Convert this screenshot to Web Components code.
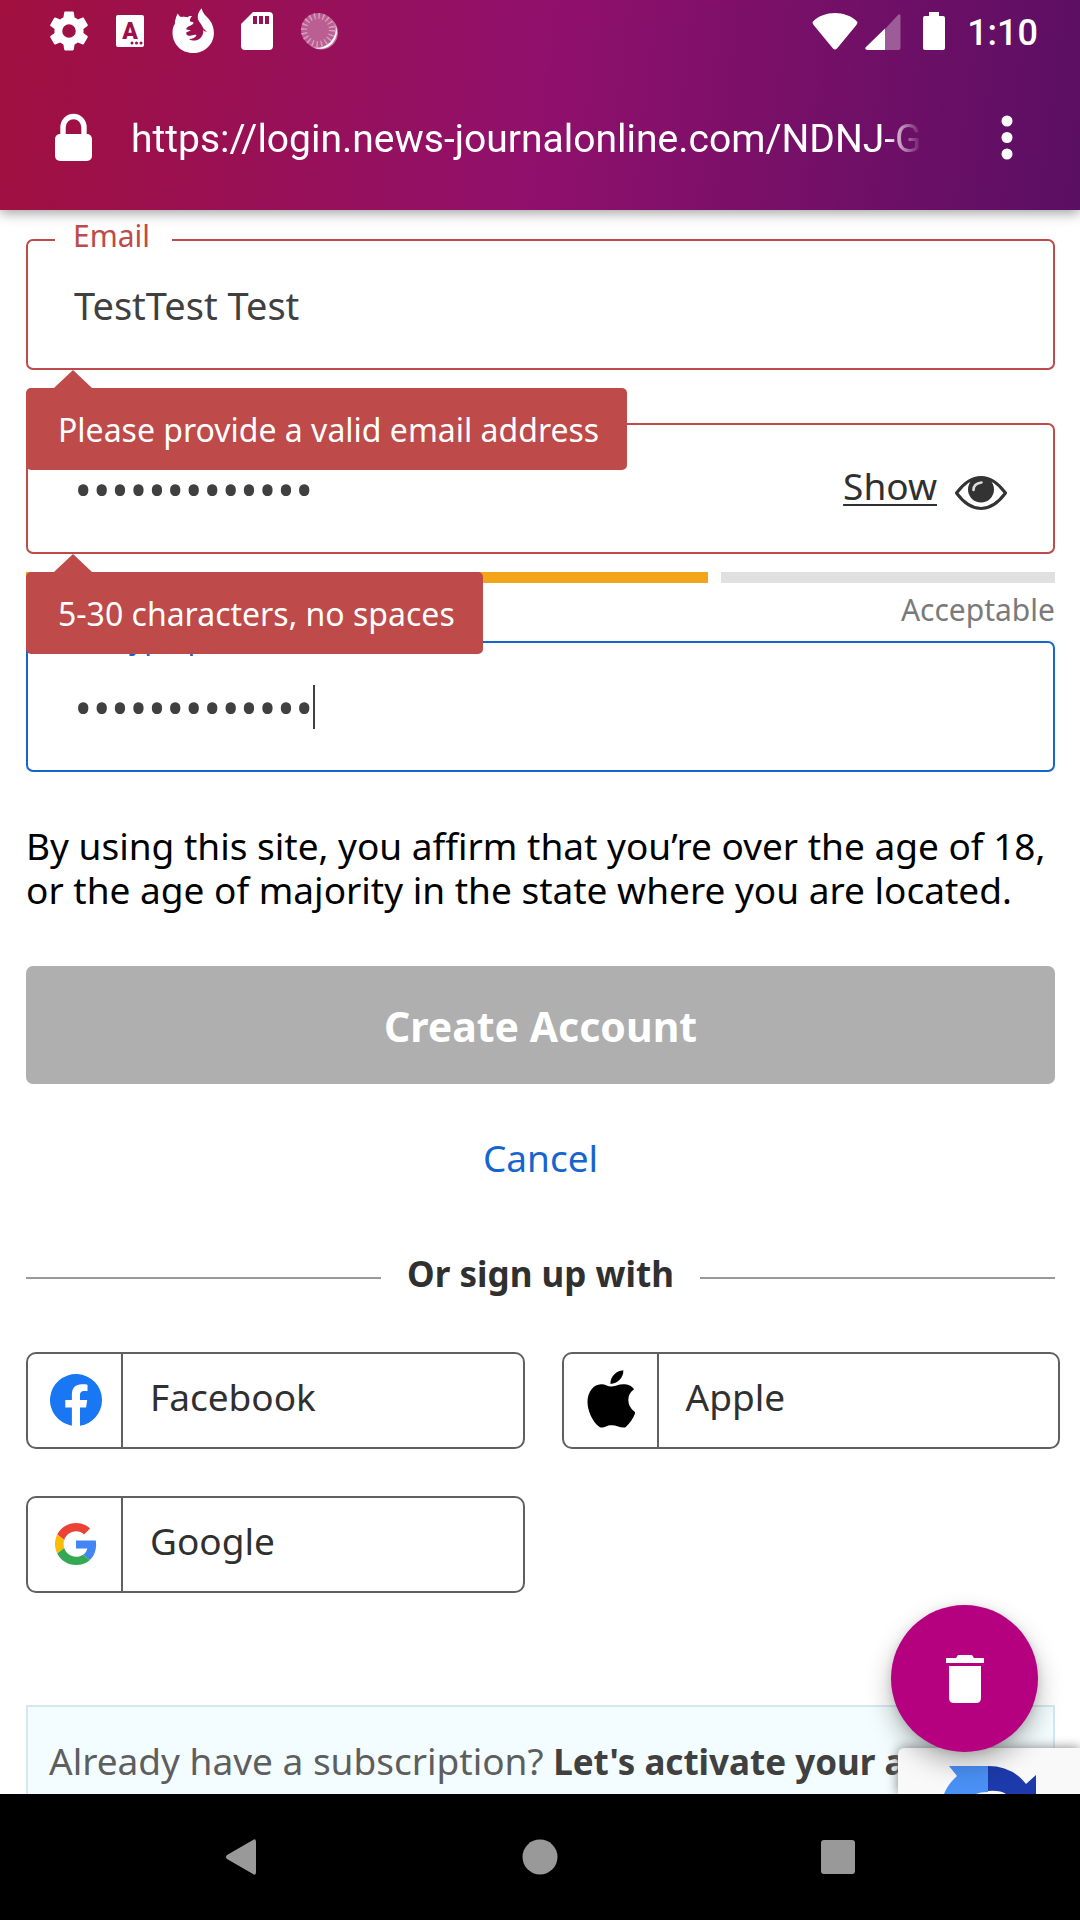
<!DOCTYPE html>
<html lang="en">
<head>
<meta charset="utf-8">
<meta name="viewport" content="width=device-width, initial-scale=1">
<title>Create Account</title>
<style>
  html, body { margin: 0; height: 100%; }
  body {
    font-family: "Noto Sans", "Open Sans", sans-serif;
    font-size: 37px; line-height: 44px; color: #303030; background: #fff;
    --error: #be4a49; --link: #1665cf; --ink: #404040; --rule: #606060;
  }
</style>
</head>
<body>
<phone-screen>
  <status-bar slot="top"></status-bar>
  <url-bar slot="top" address="https://login.news-journalonline.com/NDNJ-G"></url-bar>

  <signup-form>
    <float-field label="Email" type="text" value="TestTest Test" state="error">
      <error-tip slot="tip">Please provide a valid email address</error-tip>
    </float-field>
    <float-field class="second" name="Password" type="password" value="Passw0rd12345" state="error">
      <show-toggle slot="end"></show-toggle>
      <error-tip slot="tip">5-30 characters, no spaces</error-tip>
    </float-field>
    <strength-meter level="2">Acceptable</strength-meter>
    <float-field label="Re-type password" type="password" value="Passw0rd12345" state="focus"></float-field>
    <form-actions>By using this site, you affirm that you’re over the age of 18, or the age of majority in the state where you are located.</form-actions>
    <or-divider>Or sign up with</or-divider>
    <social-list>
      <social-button icon="facebook">Facebook</social-button>
      <social-button icon="apple">Apple</social-button>
      <social-button icon="google">Google</social-button>
    </social-list>
    <activate-note></activate-note>
  </signup-form>

  <captcha-badge slot="over"></captcha-badge>
  <erase-button slot="over"></erase-button>
  <nav-bar slot="bottom"></nav-bar>
</phone-screen>

<script>
const define = (name, html, setup) => {
  const tpl = document.createElement('template');
  tpl.innerHTML = html;
  customElements.define(name, class extends HTMLElement {
    constructor() {
      super();
      this.attachShadow({ mode: 'open' }).append(tpl.content.cloneNode(true));
    }
    connectedCallback() { if (setup) setup(this, this.shadowRoot); }
  });
};

define('phone-screen', `
<style>
  :host { display: flex; flex-direction: column; height: 100vh; overflow: hidden; }
  header { background: linear-gradient(97deg, #a1103f 0%, #90106c 50%, #5a0f63 100%);
    color: #fff; position: relative; z-index: 5; box-shadow: 0 3px 12px rgba(0,0,0,.38);
    font-family: Roboto, sans-serif; }
  main { flex: 1; min-height: 0; position: relative; overflow: hidden; }
</style>
<header><slot name="top"></slot></header>
<main><slot></slot><slot name="over"></slot></main>
<slot name="bottom"></slot>`);

define('status-bar', `
<style>
  :host { display: flex; align-items: center; justify-content: space-between;
    height: 62px; padding: 0 42px 0 50px; }
  div { display: flex; align-items: center; }
  svg { display: block; fill: #fff; }
  .l { gap: 27px; }
  .time { font-size: 36px; line-height: 40px; font-weight: 500; padding: 4px 0 0 22px; }
</style>
<div class="l">
  <svg width="38" height="40" viewBox="2.2 2 19.6 20"><path d="M19.43 12.98c.04-.32.07-.64.07-.98s-.03-.66-.07-.98l2.11-1.65c.19-.15.24-.42.12-.64l-2-3.46c-.12-.22-.39-.3-.61-.22l-2.49 1c-.52-.4-1.08-.73-1.69-.98l-.38-2.65A.49.49 0 0 0 14 2h-4c-.25 0-.46.18-.49.42l-.38 2.65c-.61.25-1.17.59-1.69.98l-2.49-1c-.23-.09-.49 0-.61.22l-2 3.46c-.13.22-.07.49.12.64l2.11 1.65c-.04.32-.07.65-.07.98s.03.66.07.98l-2.11 1.65c-.19.15-.24.42-.12.64l2 3.46c.12.22.39.3.61.22l2.49-1c.52.4 1.08.73 1.69.98l.38 2.65c.03.24.24.42.49.42h4c.25 0 .46-.18.49-.42l.38-2.65c.61-.25 1.17-.59 1.69-.98l2.49 1c.23.09.49 0 .61-.22l2-3.46c.12-.22.07-.49-.12-.64zM12 15.5a3.5 3.5 0 1 1 0-7 3.5 3.5 0 0 1 0 7z"/></svg>
  <svg width="30" height="32" viewBox="0 0 30 32"><rect x="1" y="0" width="28" height="32" rx="2"/><text x="15" y="24" text-anchor="middle" font-family="Roboto, sans-serif" font-weight="900" font-size="23" fill="#9d1048">A</text><g fill="#9d1048"><circle cx="17" cy="28" r="1.5"/><circle cx="21.500" cy="28" r="1.5"/><circle cx="26" cy="28" r="1.5"/></g></svg>
  <svg width="42" height="46" viewBox="0 0 42 46"><path d="M21 45C9 45 .5 36 .5 24.500c0-4 1-6.500 2.300-8.500C3 12 4 8.500 5.800 5.500c.7 1.500 1.500 2.600 3 3.600 2.500-.6 5-.4 7 .1 1-1.500 2.800-1.200 4.200-1.200-1.700 2-2.400 3.600-1.900 5.600l3.200.6c.5 1.500-.6 2.200-2.700 3.200-2.500 1-4 2-4.600 3.800l5 1.400-4.600 1.600c-.7 2 1.400 4 3.700 3.600 2.500-.4 3.600-1.700 6.500-.9-.8 2.400-4 3.900-7.600 4.200 5.500 3.800 14.100.2 14.300-7.900.1-4.500-2-6.500-4-9.500-2.500-3.500-2-9 2.400-13.500.8 4 2.500 6 5 8.500 4.500 4.500 7.200 9.500 7.200 16.500C41.800 36 33 45 21 45z"/><path d="M29 18l6 6-3-1z" fill="#99104f"/></svg>
  <svg width="32" height="38" viewBox="0 0 32 38"><path fill-rule="evenodd" d="M12 0h16a4 4 0 0 1 4 4v30a4 4 0 0 1-4 4H4a4 4 0 0 1-4-4V12zM12 4v8h4V4zM18 4v8h4V4zM24 4v8h4V4z"/></svg>
  <svg width="39" height="40" viewBox="0 0 39 40"><circle cx="21" cy="21.500" r="17" opacity=".45"/><path d="M35.500 14a17 17 0 0 1-22 22.500 19 19 0 0 0 22-22.500z"/><circle cx="18" cy="19" r="17" fill="#bb5f92"/><circle cx="18" cy="19" r="14" fill="none" stroke="#d6a0bf" stroke-width="6" stroke-dasharray="1.400 3"/></svg>
</div>
<div>
  <svg width="46" height="38" viewBox="0 0 46 38"><path d="M1 9.500C12-2 34-2 45 9.500 46 10.500 45 12 44 13.500L25 36.500q-2 2-4 0L2 13.500C1 12 0 10.500 1 9.500z"/></svg>
  <svg width="36" height="38" viewBox="0 0 36 38" style="margin-left:7px"><path opacity=".32" d="M20 17 32.500 3.500Q35.500 1 35.500 4V36a2 2 0 0 1-2 2H20z"/><path d="M20 16.500V38H2Q-1 37 1 35z"/></svg>
  <svg width="22" height="38" viewBox="0 0 22 38" style="margin-left:22px"><path d="M6 0h10v4h4a2 2 0 0 1 2 2v30a2 2 0 0 1-2 2H2a2 2 0 0 1-2-2V6a2 2 0 0 1 2-2h4z"/></svg>
  <span class="time">1:10</span>
</div>`);

define('url-bar', `
<style>
  :host { display: flex; align-items: center; height: 148px; padding: 2px 67px 0 55px; box-sizing: border-box; }
  svg { display: block; fill: #fff; flex: none; }
  a { flex: none; white-space: nowrap; margin: 3px auto 0 38px;
    font-size: 39px; line-height: 56px; color: #fff; text-decoration: none;
    -webkit-mask-image: linear-gradient(to left, transparent, #000 36px); mask-image: linear-gradient(to left, transparent, #000 36px); }
  button { border: 0; background: none; padding: 2px 0 0; }
</style>
<svg width="38" height="48" viewBox="0 0 38 48"><rect x="0" y="21" width="37" height="27" rx="5"/><path d="M8 24V14.500a10.500 11 0 0 1 21 0V24" fill="none" stroke="#fff" stroke-width="5.400"/></svg>
<a href="#"></a>
<button aria-label="Menu"><svg width="12" height="46" viewBox="0 0 12 46"><circle cx="6" cy="6" r="5.500"/><circle cx="6" cy="22.500" r="5.500"/><circle cx="6" cy="39" r="5.500"/></svg></button>`,
(el, r) => { r.querySelector('a').textContent = el.getAttribute('address'); });

define('signup-form', `
<style>
  :host { display: flex; flex-direction: column; padding: 29px 25px 0 26px; }
  ::slotted(.second) { margin-top: 53px; }
</style><slot></slot>`);

define('float-field', `
<style>
  :host { display: block; position: relative; --c: var(--error); }
  :host([state=focus]) { --c: var(--link); }
  .box { display: flex; align-items: center; box-sizing: border-box; min-height: 131px;
    border: 2px solid var(--c); border-radius: 7px; padding: 0 46px; background: #fff; }
  label { position: absolute; left: 29px; top: -23px; padding: 0 22px 0 18px; background: #fff;
    font-size: 30px; line-height: 40px; color: var(--c); }
  label:empty { display: none; }
  input { border: 0; outline: 0; padding: 0; margin: 0; background: none; flex: 1; min-width: 0;
    font-family: inherit; font-size: 38px; line-height: 52px; height: 66px; color: var(--ink); }
  input[type=password] { font-family: "Open Sans", sans-serif; font-size: 49px; }
  .caret { display: none; width: 2px; height: 44px; background: var(--ink); }
  :host([state=focus]) .caret { display: block; }
  :host([state=focus]) input { flex: 0 0 239px; }
  .tip { position: absolute; left: 0; top: 100%; z-index: 2; }
</style>
<div class="box"><input id="f"><span class="caret"></span><slot name="end"></slot></div>
<label for="f"></label>
<div class="tip"><slot name="tip"></slot></div>`,
(el, r) => {
  const i = r.querySelector('input');
  i.type = el.getAttribute('type');
  i.value = el.getAttribute('value');
  if (el.hasAttribute('label')) r.querySelector('label').textContent = el.getAttribute('label');
  else i.setAttribute('aria-label', el.getAttribute('name'));
});

define('error-tip', `
<style>
  :host { display: flex; flex-direction: column; align-items: flex-start; color: #fff; font-size: 32px; }
  i { width: 38px; height: 18px; margin-left: 28px; background: var(--error); clip-path: polygon(50% 0, 100% 100%, 0 100%); }
  span { background: var(--error); border-radius: 5px; padding: 20px 28px 18px 32px; white-space: nowrap; }
</style>
<i></i><span role="alert"><slot></slot></span>`);

define('show-toggle', `
<style>
  :host { display: block; }
  button { display: flex; align-items: center; gap: 18px; border: 0; background: none; padding: 0;
    font: inherit; line-height: 44px; color: #303030; }
  span { text-decoration: underline; text-decoration-thickness: 2px; text-underline-offset: 4px; padding-bottom: 6px; }
  svg { display: block; margin-top: 8px; }
</style>
<button><span>Show</span><svg width="52" height="34" viewBox="0 0 52 34"><path d="M1.500 17Q13 1.500 26 1.500T50.500 17Q39 32.500 26 32.500T1.500 17z" fill="#fff" stroke="#333" stroke-width="3"/><circle cx="26" cy="13.500" r="13" fill="#333"/><path d="M18.500 14q0-6.500 8-7.500" fill="none" stroke="#ddd" stroke-width="2.600" stroke-linecap="round"/></svg></button>`);

define('strength-meter', `
<style>
  :host { display: block; padding: 18px 0 11px; }
  .bars { display: grid; grid-template-columns: repeat(3, 1fr); gap: 13px; }
  i { height: 11px; background: #e0e0e0; }
  i.on { background: #f2a51a; }
  p { margin: 7px 0 0; text-align: right; font-size: 30px; line-height: 40px; color: #7a7a7a; }
</style>
<div class="bars"><i></i><i></i><i></i></div><p><slot></slot></p>`,
(el, r) => r.querySelectorAll('i').forEach((b, n) => b.classList.toggle('on', n < +el.getAttribute('level'))));

define('form-actions', `
<style>
  :host { display: flex; flex-direction: column; align-items: center; }
  p { margin: 52px 0 54px; align-self: stretch; color: #000; }
  button { align-self: stretch; min-height: 118px; border: 0; border-radius: 7px; background: #afafaf; color: #fff;
    font: inherit; font-size: 41px; font-weight: 700; padding: 2px 0 0; }
  a { margin-top: 52px; color: var(--link); text-decoration: none; }
</style>
<p><slot></slot></p>
<button type="submit">Create Account</button>
<a href="#">Cancel</a>`);

define('or-divider', `
<style>
  :host { display: flex; align-items: center; gap: 26px; margin-top: 72px; font-size: 35px; font-weight: 700; }
  i { flex: 1; height: 2px; background: #999; }
  span { padding-bottom: 7px; }
</style>
<i></i><span><slot></slot></span><i></i>`);

define('social-list', `
<style>
  :host { display: grid; grid-template-columns: 1fr 1fr; gap: 47px 37px; margin: 49px -5px 0 0; }
</style><slot></slot>`);

const logos = {
  facebook: '<svg width="52" height="54" viewBox="0 0 24 24"><path fill="#1977f3" d="M24 12a12 12 0 1 0-13.900 11.850V15.470H7.050V12h3.050V9.360c0-3 1.790-4.670 4.530-4.670 1.310 0 2.690.23 2.690.23v2.950h-1.510c-1.490 0-1.960.93-1.960 1.870V12h3.330l-.53 3.470h-2.800v8.380A12 12 0 0 0 24 12z"/></svg>',
  apple: '<svg width="48" height="60" viewBox="0 0 48 60"><path d="M24 16.500c4 0 8-2.800 14-2.300 4 .4 7 2.200 9 5-8.500 5.500-7 18 1.500 23-2 6-5.500 11-10 15-4 1.500-8-2-14-2s-8 3.800-12 1.800C5 51.500.5 40 .5 32 .5 21 7 14.500 14 14.200c4-.2 7 2.300 10 2.300zM23.500 14C23 7 29 1 36.300.300 36.800 7 31 14 23.500 14z"/></svg>',
  google: '<svg width="42" height="46" viewBox="0 0 48 48"><path fill="#EA4335" d="M24 9.500c3.540 0 6.710 1.220 9.210 3.600l6.850-6.850C35.900 2.380 30.470 0 24 0 14.620 0 6.510 5.380 2.560 13.220l7.980 6.190C12.430 13.720 17.740 9.500 24 9.500z"/><path fill="#4285F4" d="M46.980 24.550c0-1.570-.15-3.090-.38-4.550H24v9.020h12.940c-.58 2.960-2.260 5.480-4.780 7.180l7.730 6c4.510-4.180 7.090-10.360 7.090-17.650z"/><path fill="#FBBC05" d="M10.530 28.590c-.48-1.450-.76-2.990-.76-4.590s.27-3.140.76-4.590l-7.980-6.190C.92 16.460 0 20.120 0 24c0 3.880.92 7.540 2.560 10.780l7.970-6.190z"/><path fill="#34A853" d="M24 48c6.480 0 11.930-2.130 15.890-5.810l-7.730-6c-2.150 1.450-4.920 2.300-8.160 2.300-6.260 0-11.570-4.220-13.470-9.910l-7.980 6.190C6.510 42.620 14.620 48 24 48z"/></svg>'
};
define('social-button', `
<style>
  :host { display: flex; }
  button { flex: 1; display: flex; align-items: stretch; min-height: 97px; padding: 0; box-sizing: border-box;
    border: 2px solid var(--rule); border-radius: 10px; background: #fff;
    font: inherit; color: #303030; }
  .icon { flex: none; box-sizing: border-box; width: 95px; padding: 0 0 2px 2px; display: flex;
    align-items: center; justify-content: center; border-right: 2px solid var(--rule); }
  .name { align-self: center; padding: 0 27px 8px; }
  svg { display: block; }
</style>
<button><span class="icon"></span><span class="name"><slot></slot></span></button>`,
(el, r) => { r.querySelector('.icon').innerHTML = logos[el.getAttribute('icon')]; });

define('activate-note', `
<style>
  :host { display: block; margin-top: 112px; border: 2px solid #d5e8ef; background: #f3fcfe;
    padding: 32px 21px; white-space: nowrap; color: #5e5e5e; overflow: hidden; }
  a { color: #404040; font-size: 35px; font-weight: 700; text-decoration: none; }
</style>
Already have a subscription? <a href="#">Let's activate your account</a>`);

define('captcha-badge', `
<style>
  :host { position: absolute; right: 0; bottom: 0; width: 182px; height: 46px; background: #f9f9f9;
    border-radius: 6px 0 0 0; box-shadow: 0 0 12px gray; }
  svg { display: block; margin: 18px 0 0 46px; }
</style>
<svg width="96" height="28" viewBox="0 0 96 28"><path fill="#4a90f5" d="M5 0h39v26q-8 0-12 2H0Q4 18 13 10z"/><path fill="#1c3aa9" d="M44 0q24 0 38 18l10-9v19H62Q56 24 44 25z"/></svg>`);

define('erase-button', `
<style>
  :host { position: absolute; right: 42px; bottom: 42px; z-index: 3; }
  button { display: flex; align-items: center; justify-content: center; width: 147px; height: 147px; padding: 0;
    border: 0; border-radius: 50%; background: #b5007f; box-shadow: 0 12px 26px rgba(0,0,0,.28), 0 2px 8px rgba(0,0,0,.12); }
</style>
<button aria-label="Erase"><svg width="38" height="48" viewBox="0 0 38 48" fill="#fff"><path d="M0 3h10l2-3h14l2 3h10v5H0z"/><path d="M3 11h32v32q0 5-5 5H8q-5 0-5-5z"/></svg></button>`);

define('nav-bar', `
<style>
  :host { flex: none; display: grid; grid-template-columns: 1fr auto 1fr; align-items: center; height: 126px; background: #000; }
  button { border: 0; background: none; padding: 0; }
  button:first-of-type { justify-self: end; margin-right: 265px; }
  button:last-of-type { justify-self: start; margin-left: 263px; }
  svg { display: block; fill: #999; }
</style>
<button aria-label="Back"><svg width="32" height="36" viewBox="0 0 32 36"><path d="M28 1q3-2 3 2v30q0 4-3 2L2 20q-2-2 0-4z"/></svg></button>
<button aria-label="Home"><svg width="36" height="36" viewBox="0 0 36 36"><circle cx="18" cy="18" r="17.500"/></svg></button>
<button aria-label="Recents"><svg width="34" height="34" viewBox="0 0 34 34"><rect width="34" height="34" rx="3"/></svg></button>`);
</script>
</body>
</html>
